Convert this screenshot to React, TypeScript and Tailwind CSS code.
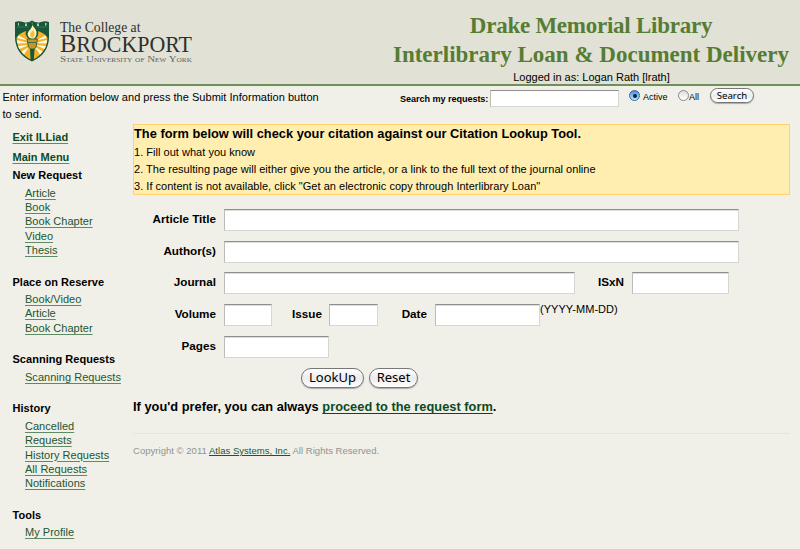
import React from "react";

const ITEM = "block w-max underline decoration-[#5f8a66] underline-offset-[1.5px]";

function Logo() {
  return (
    <svg width="200" height="84" viewBox="0 0 200 84" className="block shrink-0">
      <path d="M15 22 Q19 20.500 23 22 Q28 23.500 32 20.500 Q36 23.500 41 22 Q45 20.500 49 22 V37 C49 48 43 57 32 61.500 C21 57 15 48 15 37 Z" fill="#17573a" />
      <path d="M16.500 38 C19 33 25 30.500 32 30.500 C39 30.500 45 33 47.500 38 C47.500 47 42 55.500 32 60 C22 55.500 16.500 47 16.500 38 Z" fill="#f3b229" />
      <g fill="#fffbe6">
        <path d="M29 41 L18.500 35.500 L17.500 38 Z" />
        <path d="M28.500 43 L17 40 L17.500 43.500 Z" />
        <path d="M28.500 45 L18 46 L19.500 49 Z" />
        <path d="M29 47 L21.500 51.500 L24 54.500 Z" />
        <path d="M35 41 L45.500 35.500 L46.500 38 Z" />
        <path d="M35.500 43 L47 40 L46.500 43.500 Z" />
        <path d="M35.500 45 L46 46 L44.500 49 Z" />
        <path d="M35 47 L42.500 51.500 L40 54.500 Z" />
      </g>
      <g fill="#b5c8b0">
        <rect x="18" y="23" width="1" height="2.500" />
        <rect x="25" y="23.500" width="2" height="2.500" />
        <rect x="37" y="23.500" width="2" height="2.500" />
        <rect x="45" y="23" width="1.500" height="2.500" />
      </g>
      <path d="M17 27 H29 M36 27 H47" stroke="#6f967c" strokeWidth=".5" />
      <path d="M32 21 C37 27 39 30 38 35 Q36 40 32 40 Q27 39 25.500 34 Q26 29 30 27 Z" fill="#17573a" />
      <path d="M32 21.500 C31 26 36 28 36.500 32 Q37 37 33 39.500 Q28 38 27.500 34 Q28 31 30.500 29 Q33 26 32 21.500Z" fill="#fff3b8" />
      <path d="M33 30 Q36 34 33 38 Q29 36.500 30.500 33 Z" fill="#f5bf3d" />
      <path d="M27 39 H37.500 L36.500 44 Q37 47 34 49 H30.500 Q27.500 47 28 44 Z" fill="#c8942b" stroke="#17573a" strokeWidth=".8" />
      <path d="M28 42.500 H36.500" stroke="#17573a" strokeWidth=".7" />
      <path d="M30 49 H34.500 L33.800 60 L32 61 L30.600 60 Z" fill="#17573a" />
      <g fill="#30302e" fontFamily="'Liberation Serif', serif">
        <text x="60" y="32" fontSize="15" textLength="80.500" lengthAdjust="spacingAndGlyphs">The College at</text>
        <text x="60" y="52" fontSize="25" textLength="132" lengthAdjust="spacingAndGlyphs">B<tspan fontSize="22.500">ROCKPORT</tspan></text>
        <text x="60" y="61.500" fontSize="9" style={{ fontVariant: "small-caps" }} textLength="132" lengthAdjust="spacingAndGlyphs" fill="#62625c">State University of New York</text>
      </g>
    </svg>
  );
}

function Group({ title, items, first }: { title: string; items: string[]; first?: boolean }) {
  return (
    <section className={first ? "" : "mt-[17.1px]"}>
      <h2 className="mb-[3.5px] h-[14px] whitespace-nowrap text-[11px] font-bold leading-[14px] tracking-[0.03px]">{title}</h2>
      <ul className="pl-[12.5px] text-[11px] leading-[14.4px] tracking-[0.03px] text-[#1c5630]">
        {items.map((i) => (
          <li key={i} className="h-[14.4px]"><a className={ITEM}>{i}</a></li>
        ))}
      </ul>
    </section>
  );
}

function Field({ label, labelClass, inputClass }: { label: string; labelClass: string; inputClass: string }) {
  return (
    <>
      <label className={"shrink-0 whitespace-nowrap text-right text-[11.7px] font-bold leading-[20.4px] " + labelClass}>{label}</label>
      <input className={"h-[22px] shrink-0 border border-[#d6d6d2] border-t-[#8f8f8d] border-l-[#bcbcb9] bg-white shadow-[inset_0_1px_0_#dddddd] outline-none " + inputClass} />
    </>
  );
}

const ROW = "flex h-[31.7px] items-start";
const PILL = "rounded-full border border-[#777] bg-linear-to-b from-white via-[#ececec] to-white font-['Noto_Sans',sans-serif] text-black shadow-[0_1px_1px_#aaa]";

export default function App() {
  return (
    <div className="h-[549px] w-[800px] overflow-hidden bg-[#f0f0e8] font-['Liberation_Sans',Arial,sans-serif] text-black">
      <header className="flex h-[86px] justify-between border-b-2 border-[#70905a] bg-[#e1e1d5]">
        <Logo />
        <div className="flex w-[418px] flex-col items-center pt-[11px] text-center">
          <h1 className="whitespace-nowrap font-['Liberation_Serif',serif] text-[23px] font-bold leading-[29px] text-[#567d33]">
            <span className="block tracking-[-0.25px]">Drake Memorial Library</span>
            <span className="block">Interlibrary Loan &amp; Document Delivery</span>
          </h1>
          <p className="pl-px text-[11px] leading-[16px]">Logged in as: Logan Rath [lrath]</p>
        </div>
      </header>

      <div className="flex h-[35px]">
        <p className="w-[400px] whitespace-nowrap pl-[2.5px] pt-[3px] text-[11px] leading-[17px] tracking-[0.03px]">
          Enter information below and press the Submit Information button<br />to send.
        </p>
        <div className="flex items-start">
          <b className="w-[90px] whitespace-nowrap pt-[7px] text-[9.1px] leading-[12px] tracking-[-0.06px]">Search my requests:</b>
          <input className="mt-[4px] h-[17px] w-[129px] border border-[#d6d6d2] border-t-[#8f8f8d] border-l-[#bcbcb9] bg-white" />
          <span className="ml-[10px] mt-[4px] flex size-[11px] items-center justify-center rounded-full border border-[#3d659c] bg-linear-to-b from-[#4f8edc] to-[#b4f0ff]">
            <i className="size-[4px] rounded-full bg-[#0c1c3c]" />
          </span>
          <span className="ml-[3px] mt-[5px] w-[35px] text-[9px] leading-[12px]">Active</span>
          <span className="mt-[4px] size-[11px] rounded-full border border-[#888] bg-linear-to-b from-[#dedede] to-white" />
          <span className="mt-[5px] w-[21px] text-[9px] leading-[12px]">All</span>
          <button className={"mt-[2px] h-[15px] w-[44px] text-[9.6px] leading-[12px] " + PILL}>Search</button>
        </div>
      </div>

      <div className="flex">
        <nav className="w-[133px] shrink-0 pl-[12.5px] pt-[7px]">
          <div className="-mt-[0.6px] mb-[0.6px] text-[11px] font-bold leading-[20px] text-[#0d4a22]">
            <a className={ITEM}>Exit ILLiad</a>
            <a className={ITEM}>Main Menu</a>
          </div>
          <Group first title="New Request" items={["Article", "Book", "Book Chapter", "Video", "Thesis"]} />
          <Group title="Place on Reserve" items={["Book/Video", "Article", "Book Chapter"]} />
          <Group title="Scanning Requests" items={["Scanning Requests"]} />
          <Group title="History" items={["Cancelled", "Requests", "History Requests", "All Requests", "Notifications"]} />
          <Group title="Tools" items={["My Profile"]} />
        </nav>

        <main className="w-[657px] pt-[3px]">
          <section className="h-[71px] border border-[#ffd36b] bg-[#ffeeb0]">
            <h3 className="h-[19px] whitespace-nowrap text-[12.8px] font-bold leading-[18px] tracking-[0.02px]">The form below will check your citation against our Citation Lookup Tool.</h3>
            <ol className="whitespace-nowrap text-[11px] leading-[17px] tracking-[0.025px]">
              <li>1. Fill out what you know</li>
              <li>2. The resulting page will either give you the article, or a link to the full text of the journal online</li>
              <li className="-mt-[0.4px]">3. If content is not available, click "Get an electronic copy through Interlibrary Loan"</li>
            </ol>
          </section>

          <form className="pt-[14px]">
            <div className={ROW}><Field label="Article Title" labelClass="w-[83px]" inputClass="ml-[8px] w-[515px]" /></div>
            <div className={ROW}><Field label="Author(s)" labelClass="w-[83px]" inputClass="ml-[8px] w-[515px]" /></div>
            <div className={ROW}>
              <Field label="Journal" labelClass="w-[83px]" inputClass="ml-[8px] w-[351px]" />
              <Field label="ISxN" labelClass="w-[49px]" inputClass="ml-[8px] w-[97px]" />
            </div>
            <div className={ROW}>
              <Field label="Volume" labelClass="w-[83px]" inputClass="ml-[8px] w-[48px]" />
              <Field label="Issue" labelClass="w-[50px]" inputClass="ml-[7px] w-[49px]" />
              <Field label="Date" labelClass="w-[49px]" inputClass="ml-[8px] w-[105px]" />
              <span className="text-[11px] leading-[11px] tracking-[0.05px]">(YYYY-MM-DD)</span>
            </div>
            <div className={ROW}><Field label="Pages" labelClass="w-[83px]" inputClass="ml-[8px] w-[105px]" /></div>
            <div className="flex h-[30px] gap-[5px] pl-[168px] pt-[0.5px]">
              <button type="button" className={"h-[20px] w-[63px] text-[13px] leading-[17px] " + PILL}>LookUp</button>
              <button type="button" className={"h-[20px] w-[49px] text-[13px] leading-[17px] " + PILL}>Reset</button>
            </div>
          </form>

          <p className="h-[36px] whitespace-nowrap text-[12.8px] font-bold leading-[20px] tracking-[0.02px]">
            If you'd prefer, you can always <a className="text-[#0d4a22] underline underline-offset-2">proceed to the request form</a>.
          </p>
          <footer className="whitespace-nowrap border-t border-[#e4e5e3] pt-[9.4px] text-[9.5px] leading-[13px] tracking-[0.03px] text-[#929290]">
            Copyright © 2011 <a className="text-[#1c5630] underline">Atlas Systems, Inc.</a> All Rights Reserved.
          </footer>
        </main>
      </div>
    </div>
  );
}
